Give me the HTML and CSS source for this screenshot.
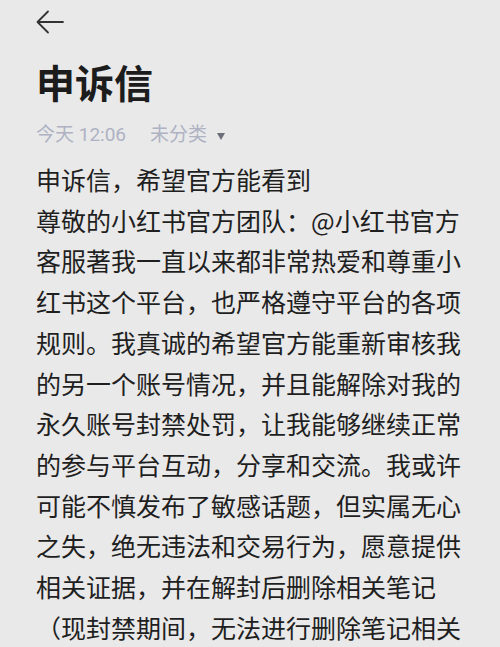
FILE: index.html
```html
<!DOCTYPE html>
<html lang="zh-CN">
<head>
    <meta charset="UTF-8">
    <meta name="viewport" content="width=device-width, initial-scale=1.0">
    <title>申诉信</title>
    <link rel="stylesheet" href="styles.css">
</head>
<body>
    <div class="note">
        <div class="top-bar">
            <svg class="back" width="28" height="24" viewBox="0 0 28 24">
                <path d="M27 12 H2 M12 1.5 L1.5 12 L12 22.5" fill="none" stroke="#333" stroke-width="1.8" stroke-linecap="round" stroke-linejoin="round"/>
            </svg>
        </div>
        <h1 class="note-title">申诉信</h1>
        <div class="note-meta">
            <span class="time">今天 12:06</span>
            <span class="folder">未分类 <span class="caret"></span></span>
        </div>
        <div class="note-body">
            <p>申诉信，希望官方能看到</p>
            <p>尊敬的小红书官方团队：@小红书官方客服著我一直以来都非常热爱和尊重小红书这个平台，也严格遵守平台的各项规则。我真诚的希望官方能重新审核我的另一个账号情况，并且能解除对我的永久账号封禁处罚，让我能够继续正常的参与平台互动，分享和交流。我或许可能不慎发布了敏感话题，但实属无心之失，绝无违法和交易行为，愿意提供相关证据，并在解封后删除相关笔记（现封禁期间，无法进行删除笔记相关</p>
        </div>
    </div>
</body>
</html>
```

FILE: styles.css
```css
body {
    margin: 0;
    padding: 0;
    background: #e9e9e9;
    font-family: "Noto Sans CJK SC", "Noto Sans", sans-serif;
    color: #1f1f1f;
    overflow: hidden;
}
.note {
    padding: 0 36px;
}
.top-bar {
    padding-top: 10px;
    height: 24px;
}
.back {
    display: block;
}
.note-title {
    margin: 23px 0 0;
    font-size: 39px;
    line-height: 48px;
    font-weight: 700;
    color: #1c1c1c;
}
.note-meta {
    margin-top: 17px;
    display: flex;
    align-items: center;
    gap: 24px;
    font-family: Roboto, "Noto Sans CJK SC", sans-serif;
    font-size: 19px;
    line-height: 26px;
    color: #aeb2c3;
}
.folder {
    display: flex;
    align-items: center;
    gap: 10px;
}
.caret {
    width: 0;
    height: 0;
    border-left: 4.5px solid transparent;
    border-right: 4.5px solid transparent;
    border-top: 7px solid #6c6f7a;
    margin-top: 2px;
}
.note-body {
    margin-top: 11px;
    width: 428px;
    font-size: 25px;
    line-height: 40.7px;
}
.note-body p {
    margin: 0;
}
```
